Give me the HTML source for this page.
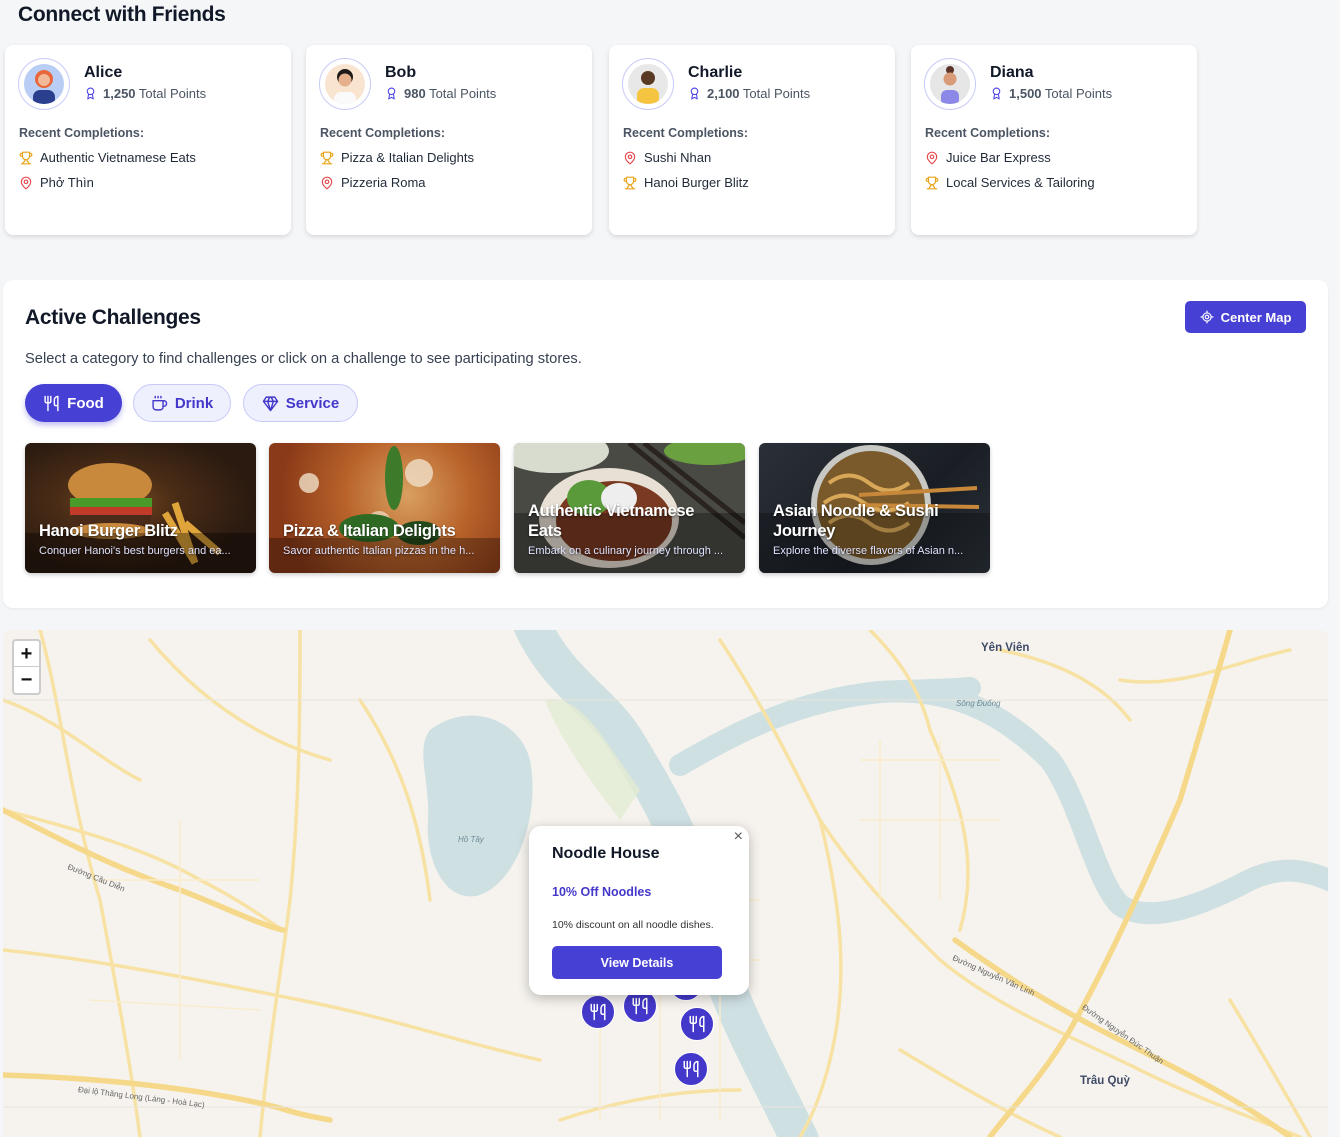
<!DOCTYPE html>
<html><head><meta charset="utf-8">
<style>
*{box-sizing:border-box;margin:0;padding:0}
body{width:1340px;height:1137px;overflow:hidden;background:#f5f6f8;font-family:"Liberation Sans","Noto Sans CJK SC",sans-serif;color:#111827;position:relative}
h1{position:absolute;left:18px;top:3px;font-size:21px;font-weight:700;color:#111827;letter-spacing:-0.3px}
.card{position:absolute;top:45px;width:286px;height:190px;background:#fff;border-radius:8px;box-shadow:0 2px 5px rgba(0,0,0,.12)}
.av{position:absolute;left:13px;top:13px;width:52px;height:52px;border-radius:50%;border:1px solid #c7caf7;background:#fff}
.av .in{position:absolute;left:5px;top:5px;width:40px;height:40px;border-radius:50%;overflow:hidden}
.name{position:absolute;left:79px;top:19px;font-size:16px;font-weight:700}
.pts{position:absolute;left:79px;top:41px;font-size:13px;color:#4b5563}
.pts b{color:#4b5563}
.rc{position:absolute;left:14px;top:81px;font-size:12.5px;font-weight:700;color:#4b5563}
.it{position:absolute;left:14px;font-size:13px;color:#1f2937;display:flex;align-items:center;gap:7px}
.it svg{width:14px;height:14px}
.panel{position:absolute;left:3px;top:280px;width:1325px;height:328px;background:#fff;border-radius:10px;box-shadow:0 1px 3px rgba(0,0,0,.06)}
.panel h2{position:absolute;left:22px;top:26px;font-size:21px;font-weight:700;letter-spacing:-0.3px}
.panel p{position:absolute;left:22px;top:71px;font-size:14.7px;color:#374151}
.cm{position:absolute;left:1182px;top:21px;width:121px;height:32px;background:#4740d4;border-radius:5px;color:#fff;font-size:13px;font-weight:700;display:flex;align-items:center;justify-content:center;gap:7px}
.pill{position:absolute;top:104px;height:38px;border-radius:19px;display:flex;align-items:center;justify-content:center;gap:7px;font-size:15px;font-weight:700}
.pill.on{background:#4740d4;color:#fff;box-shadow:0 3px 6px rgba(71,64,212,.35)}
.pill.off{background:#eef0fe;color:#4338ca;border:1px solid #c7caf7}
.ch{position:absolute;top:163px;width:231px;height:130px;border-radius:6px;overflow:hidden;box-shadow:0 2px 4px rgba(0,0,0,.2)}
.ch .t{position:absolute;left:14px;font-size:16.5px;font-weight:700;color:#fff;line-height:20px;text-shadow:0 1px 2px rgba(0,0,0,.6);letter-spacing:-0.3px}
.ch .s{position:absolute;left:14px;top:102px;font-size:11px;color:#e0e3ff;white-space:nowrap;text-shadow:0 1px 2px rgba(0,0,0,.6)}
.map{position:absolute;left:3px;top:630px;width:1325px;height:507px;overflow:hidden;border-radius:8px 8px 0 0;background:#f6f3ee}
.zoom{position:absolute;left:9px;top:9px;width:29px;height:56px;background:#fff;border:2px solid rgba(0,0,0,.2);border-radius:4px}
.zoom div{height:26px;text-align:center;font-size:20px;font-weight:700;line-height:26px;color:#111}
.pop{position:absolute;left:529px;top:826px;width:220px;height:169px;background:#fff;border-radius:12px;box-shadow:0 3px 12px rgba(0,0,0,.25)}
.pop .x{position:absolute;right:6px;top:2px;font-size:16px;color:#555}
.pop h3{position:absolute;left:23px;top:19px;font-size:16px;font-weight:700}
.pop .o{position:absolute;left:23px;top:59px;font-size:12.5px;font-weight:700;color:#4338ca}
.pop .d{position:absolute;left:23px;top:93px;font-size:10.5px;color:#333}
.pop .b{position:absolute;left:23px;top:120px;width:170px;height:33px;background:#4740d4;border-radius:5px;color:#fff;font-size:12.5px;font-weight:700;display:flex;align-items:center;justify-content:center}
.mk{position:absolute;width:34px;height:34px;border-radius:50%;background:#4338ca;border:1.5px solid #fff;display:flex;align-items:center;justify-content:center}
</style></head><body>
<h1>Connect with Friends</h1>

<svg width="0" height="0" style="position:absolute">
<defs>
<symbol id="trophy" viewBox="0 0 24 24"><path d="M6 9H4.5a2.5 2.5 0 0 1 0-5H6M18 9h1.5a2.5 2.5 0 0 0 0-5H18M4 22h16M10 14.7V17c0 .6-.5 1-1 1.2C7.8 18.8 7 20.2 7 22M14 14.7V17c0 .6.5 1 1 1.2 1.2.6 2 2 2 3.8M18 2H6v7a6 6 0 0 0 12 0V2z" fill="none" stroke="#e8a317" stroke-width="2" stroke-linecap="round" stroke-linejoin="round"/></symbol>
<symbol id="pin" viewBox="0 0 24 24"><path d="M20 10c0 6-8 12-8 12s-8-6-8-12a8 8 0 0 1 16 0z" fill="none" stroke="#e5484d" stroke-width="2"/><circle cx="12" cy="10" r="3" fill="none" stroke="#e5484d" stroke-width="2"/></symbol>
<symbol id="award" viewBox="0 0 24 24"><circle cx="12" cy="8" r="6" fill="none" stroke="#4f46e5" stroke-width="2"/><path d="M15.5 13 17 22l-5-3-5 3 1.5-9" fill="none" stroke="#4f46e5" stroke-width="2" stroke-linejoin="round"/></symbol>
<symbol id="fork" viewBox="0 0 24 24"><path d="M3 2v7c0 1.1.9 2 2 2h4a2 2 0 0 0 2-2V2M7 2v20M21 15V2a5 5 0 0 0-5 5v6c0 1.1.9 2 2 2h3zm0 0v7" fill="none" stroke="#fff" stroke-width="2" stroke-linecap="round" stroke-linejoin="round"/></symbol>
</defs></svg>

<div class="card" style="left:5px">
 <div class="av"><div class="in" style="background:#b9cef5"><svg width="40" height="40"><circle cx="20" cy="15" r="9" fill="#e8663a"/><circle cx="20" cy="16" r="6" fill="#f2b999"/><rect x="9" y="26" width="22" height="16" rx="7" fill="#2b3f8f"/></svg></div></div>
 <div class="name">Alice</div>
 <div class="pts"><svg width="13" height="13" style="vertical-align:-2px;margin-right:6px"><use href="#award"/></svg><b>1,250</b> Total Points</div>
 <div class="rc">Recent Completions:</div>
 <div class="it" style="top:105px"><svg><use href="#trophy"/></svg>Authentic Vietnamese Eats</div>
 <div class="it" style="top:130px"><svg><use href="#pin"/></svg>Phở Thìn</div>
</div>
<div class="card" style="left:306px">
 <div class="av"><div class="in" style="background:#f9e4d0"><svg width="40" height="40"><circle cx="20" cy="13" r="8" fill="#1f1a17"/><circle cx="20" cy="16" r="6.5" fill="#e6b08d"/><rect x="9" y="28" width="22" height="14" rx="7" fill="#fafafa"/></svg></div></div>
 <div class="name">Bob</div>
 <div class="pts"><svg width="13" height="13" style="vertical-align:-2px;margin-right:6px"><use href="#award"/></svg><b>980</b> Total Points</div>
 <div class="rc">Recent Completions:</div>
 <div class="it" style="top:105px"><svg><use href="#trophy"/></svg>Pizza &amp; Italian Delights</div>
 <div class="it" style="top:130px"><svg><use href="#pin"/></svg>Pizzeria Roma</div>
</div>
<div class="card" style="left:609px">
 <div class="av"><div class="in" style="background:#e8e8e8"><svg width="40" height="40"><circle cx="20" cy="14" r="7" fill="#5a3a24"/><rect x="9" y="24" width="22" height="18" rx="7" fill="#f5c542"/></svg></div></div>
 <div class="name">Charlie</div>
 <div class="pts"><svg width="13" height="13" style="vertical-align:-2px;margin-right:6px"><use href="#award"/></svg><b>2,100</b> Total Points</div>
 <div class="rc">Recent Completions:</div>
 <div class="it" style="top:105px"><svg><use href="#pin"/></svg>Sushi Nhan</div>
 <div class="it" style="top:130px"><svg><use href="#trophy"/></svg>Hanoi Burger Blitz</div>
</div>
<div class="card" style="left:911px">
 <div class="av"><div class="in" style="background:#e6e6e6"><svg width="40" height="40"><circle cx="20" cy="6" r="4" fill="#5a3428"/><circle cx="20" cy="15" r="6.5" fill="#d89a78"/><rect x="11" y="26" width="18" height="16" rx="6" fill="#8b88e8"/></svg></div></div>
 <div class="name">Diana</div>
 <div class="pts"><svg width="13" height="13" style="vertical-align:-2px;margin-right:6px"><use href="#award"/></svg><b>1,500</b> Total Points</div>
 <div class="rc">Recent Completions:</div>
 <div class="it" style="top:105px"><svg><use href="#pin"/></svg>Juice Bar Express</div>
 <div class="it" style="top:130px"><svg><use href="#trophy"/></svg>Local Services &amp; Tailoring</div>
</div>

<div class="panel">
 <h2>Active Challenges</h2>
 <div class="cm"><svg width="14" height="14" viewBox="0 0 24 24" fill="none" stroke="#fff" stroke-width="2"><circle cx="12" cy="12" r="7"/><circle cx="12" cy="12" r="3"/><path d="M12 1v4M12 19v4M1 12h4M19 12h4"/></svg>Center Map</div>
 <p>Select a category to find challenges or click on a challenge to see participating stores.</p>
 <div class="pill on" style="left:22px;width:97px"><svg width="17" height="17"><use href="#fork"/></svg>Food</div>
 <div class="pill off" style="left:130px;width:98px"><svg width="17" height="17" viewBox="0 0 24 24" fill="none" stroke="#4338ca" stroke-width="2" stroke-linecap="round"><path d="M17 8h1a4 4 0 1 1 0 8h-1M3 8h14v9a4 4 0 0 1-4 4H7a4 4 0 0 1-4-4V8zM6 2v2M10 2v2M14 2v2"/></svg>Drink</div>
 <div class="pill off" style="left:240px;width:115px"><svg width="17" height="17" viewBox="0 0 24 24" fill="none" stroke="#4338ca" stroke-width="2" stroke-linejoin="round"><path d="M6 3h12l4 6-10 13L2 9z M2 9h20 M12 22 8 9l3-6 M12 22l4-13-3-6"/></svg>Service</div>

 <div class="ch" style="left:22px;background:radial-gradient(ellipse at 40% 45%,#7a4a22 0,#4a2c16 30%,#2a1a10 70%)">
  <svg width="231" height="130" style="position:absolute"><ellipse cx="85" cy="42" rx="42" ry="22" fill="#c8893d"/><rect x="45" y="55" width="82" height="10" fill="#4a9a2a"/><rect x="45" y="64" width="82" height="8" fill="#c23a2a"/><rect x="48" y="72" width="78" height="12" fill="#4a2a18"/><ellipse cx="86" cy="88" rx="40" ry="8" fill="#c8893d"/><path d="M140 70 l30 50 M150 60 l20 60 M160 80 l35 30" stroke="#e0a53a" stroke-width="7"/><rect x="0" y="90" width="231" height="40" fill="rgba(0,0,0,.35)"/></svg>
  <div class="t" style="top:78px">Hanoi Burger Blitz</div><div class="s">Conquer Hanoi's best burgers and ea...</div></div>
 <div class="ch" style="left:266px;background:radial-gradient(circle at 60% 40%,#d9a060 0,#b8622a 40%,#8a3a18 80%)">
  <svg width="231" height="130" style="position:absolute"><circle cx="40" cy="40" r="10" fill="#f0e0c8" opacity=".8"/><circle cx="150" cy="30" r="14" fill="#f0e0c8" opacity=".8"/><circle cx="110" cy="80" r="12" fill="#f0e0c8" opacity=".7"/><ellipse cx="125" cy="35" rx="9" ry="32" fill="#3d7a2a"/><ellipse cx="100" cy="85" rx="30" ry="14" fill="#2f6a24"/><ellipse cx="150" cy="90" rx="22" ry="12" fill="#244a1c"/><rect x="0" y="95" width="231" height="35" fill="rgba(0,0,0,.3)"/></svg>
  <div class="t" style="top:78px">Pizza &amp; Italian Delights</div><div class="s">Savor authentic Italian pizzas in the h...</div></div>
 <div class="ch" style="left:511px;background:#4a4a44">
  <svg width="231" height="130" style="position:absolute"><ellipse cx="40" cy="8" rx="55" ry="22" fill="#d8dccf"/><ellipse cx="195" cy="8" rx="45" ry="14" fill="#6aa040"/><ellipse cx="95" cy="75" rx="70" ry="50" fill="#e8e0d4"/><ellipse cx="100" cy="78" rx="58" ry="40" fill="#7a3a22"/><ellipse cx="75" cy="55" rx="22" ry="18" fill="#5a9a3a"/><ellipse cx="105" cy="55" rx="18" ry="15" fill="#eee"/><path d="M115 0 L231 95 M130 0 L231 80" stroke="#2a2420" stroke-width="5"/><rect x="0" y="70" width="231" height="60" fill="rgba(0,0,0,.3)"/></svg>
  <div class="t" style="top:58px">Authentic Vietnamese<br>Eats</div><div class="s">Embark on a culinary journey through ...</div></div>
 <div class="ch" style="left:756px;background:linear-gradient(135deg,#2a3038,#1a1e24 60%,#2c323a)">
  <svg width="231" height="130" style="position:absolute"><circle cx="112" cy="62" r="60" fill="#c8c8c4"/><circle cx="112" cy="62" r="54" fill="#7a5a2a"/><path d="M70 40 q20-15 40 0 t40 0 M65 60 q20-15 40 0 t45 0 M70 80 q20-15 40 0 t40 0" stroke="#d8a858" stroke-width="4" fill="none"/><path d="M100 52 L218 45 M100 62 L220 64" stroke="#c8883a" stroke-width="4"/><rect x="0" y="70" width="231" height="60" fill="rgba(0,0,0,.25)"/></svg>
  <div class="t" style="top:58px">Asian Noodle &amp; Sushi<br>Journey</div><div class="s">Explore the diverse flavors of Asian n...</div></div>
</div>

<div class="map">
<svg width="1340" height="507" viewBox="3 630 1340 507" style="position:absolute;left:0;top:0">
 <g fill="none" stroke="#cfe0e3" stroke-linecap="round" stroke-linejoin="round">
  <path d="M530 620 C555 680 600 700 625 740 C655 790 680 830 700 900 C715 960 730 1000 760 1060 C775 1090 790 1120 800 1140" stroke-width="38"/>
  <path d="M680 765 C740 730 800 700 880 692 C960 686 1010 720 1050 760 C1080 800 1095 880 1120 905 C1150 925 1200 905 1240 885 C1280 862 1310 870 1340 885" stroke-width="22"/>
  <path d="M880 692 C920 690 950 690 970 688" stroke-width="22"/>
 </g>
 <path d="M430 730 C470 700 520 720 530 760 C540 810 520 880 480 895 C445 905 425 860 428 820 C430 780 415 750 430 730Z" fill="#cfe0e3"/>
 <path d="M545 700 C580 690 610 750 640 790 L620 820 C590 780 560 740 545 700Z" fill="#e2ebd2" opacity=".8"/>
 <g fill="none" stroke="#f7e2a4" stroke-width="3.5" stroke-linecap="round">
  <path d="M3 810 C80 830 150 850 200 880 C250 905 280 930 283 930"/>
  <path d="M300 630 C300 700 300 800 290 900 C283 960 270 1030 260 1137"/>
  <path d="M3 700 C60 720 100 760 140 780"/>
  <path d="M40 630 C60 700 70 800 100 900 C115 980 130 1060 140 1137"/>
  <path d="M720 640 C760 700 790 760 820 820 C860 880 900 920 940 960 C1000 1010 1080 1040 1140 1070 C1200 1100 1260 1120 1300 1137"/>
  <path d="M820 820 C840 900 850 980 830 1060 C820 1100 810 1120 800 1137"/>
  <path d="M870 630 C900 660 920 690 930 730 C960 800 980 860 960 930"/>
  <path d="M3 950 C100 960 200 980 300 1000 C400 1020 450 1040 540 1060"/>
  <path d="M1000 650 C1050 660 1100 680 1130 720"/>
  <path d="M1120 680 C1180 690 1240 660 1290 650"/>
  <path d="M900 1050 C950 1080 1000 1110 1060 1137"/>
  <path d="M1230 1000 C1260 1050 1290 1100 1310 1137"/>
  <path d="M560 1120 C620 1100 680 1090 740 1090"/>
  <path d="M360 700 C400 760 420 820 430 900"/>
  <path d="M150 640 C200 700 260 740 330 760"/>
 </g>
 <g fill="none" stroke="#f5d889" stroke-width="5.5" stroke-linecap="round">
  <path d="M3 810 C60 840 120 870 180 890 C220 905 260 925 283 930"/>
  <path d="M3 1075 C100 1078 200 1088 280 1108 C300 1115 320 1118 330 1120"/>
  <path d="M1230 630 C1210 700 1195 750 1180 800 C1150 870 1110 960 1070 1030 C1040 1080 1010 1110 990 1137"/>
  <path d="M955 940 C1010 980 1060 1010 1120 1040 C1180 1070 1240 1100 1290 1137"/>
 </g>
 <g stroke="#f9ecce" stroke-width="1.5" fill="none">
  <path d="M560 900 L760 900 M560 960 L760 960 M600 870 L600 1120 M660 870 L660 1120 M720 870 L720 1120"/>
  <path d="M860 760 L1000 760 M860 820 L1000 820 M880 740 L880 900 M940 740 L940 900"/>
  <path d="M100 880 L260 880 M90 1000 L260 1010 M180 820 L180 1060"/>
 </g>
 <path d="M3 700 L1328 700 M3 1107 L1328 1107" stroke="#e8e4dc" stroke-width="1"/>
</svg>
 <div class="zoom"><div style="border-bottom:1px solid #ccc">+</div><div>−</div></div>
 <div style="position:absolute;left:978px;top:12px;font-size:11.5px;font-weight:700;color:#3e4a66">Yên Viên</div>
 <div style="position:absolute;left:953px;top:69px;font-size:8px;font-style:italic;color:#6a8a96">Sông Đuống</div>
 <div style="position:absolute;left:1077px;top:445px;font-size:11.5px;font-weight:700;color:#3e4a66">Trâu Quỳ</div>
 <div style="position:absolute;left:455px;top:205px;font-size:8px;font-style:italic;color:#6a8a96">Hồ Tây</div>
 <div style="position:absolute;left:65px;top:232px;font-size:8px;color:#666;transform:rotate(22deg);transform-origin:left">Đường Cầu Diễn</div>
 <div style="position:absolute;left:75px;top:455px;font-size:8px;color:#666;transform:rotate(7deg);transform-origin:left">Đại lộ Thăng Long (Láng - Hoà Lạc)</div>
 <div style="position:absolute;left:950px;top:323px;font-size:8px;color:#666;transform:rotate(24deg);transform-origin:left">Đường Nguyễn Văn Linh</div>
 <div style="position:absolute;left:1080px;top:372px;font-size:8px;color:#666;transform:rotate(35deg);transform-origin:left">Đường Nguyễn Đức Thuận</div>
</div>

<div class="mk" style="left:669px;top:967px"></div>
<div class="mk" style="left:581px;top:995px"><svg width="18" height="18"><use href="#fork"/></svg></div>
<div class="mk" style="left:623px;top:989px"><svg width="18" height="18"><use href="#fork"/></svg></div>
<div class="mk" style="left:680px;top:1007px"><svg width="18" height="18"><use href="#fork"/></svg></div>
<div class="mk" style="left:674px;top:1052px"><svg width="18" height="18"><use href="#fork"/></svg></div>

<div class="pop">
 <div class="x">×</div>
 <h3>Noodle House</h3>
 <div class="o">10% Off Noodles</div>
 <div class="d">10% discount on all noodle dishes.</div>
 <div class="b">View Details</div>
</div>
</body></html>
